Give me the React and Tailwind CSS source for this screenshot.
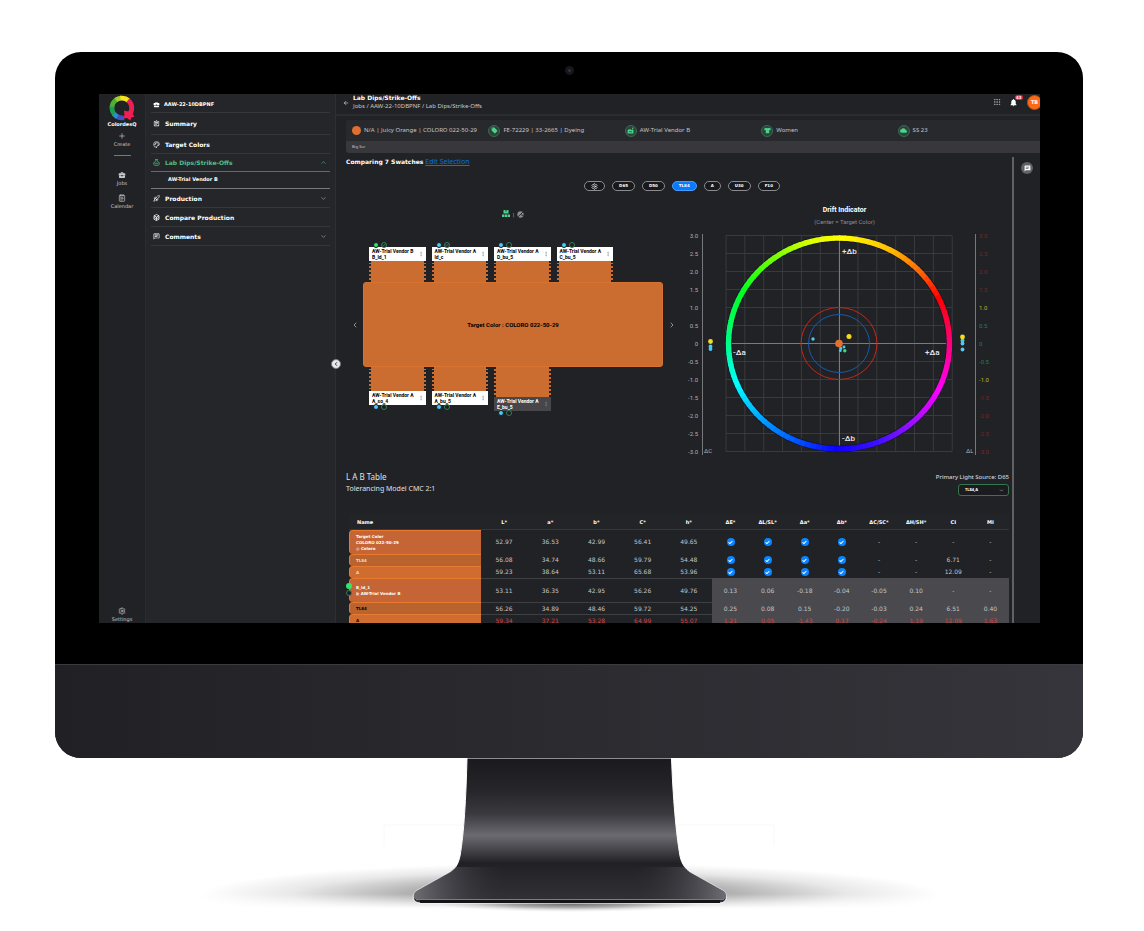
import { useState } from "react";
import {
  ArrowLeft,
  Check,
  ChevronDown,
  ChevronLeft,
  ChevronRight,
  ChevronUp,
  EllipsisVertical,
  Grip,
  NotepadText,
  Palette,
  Plus,
  Rocket,
  Settings,
} from "lucide-react";
import {
  MdBusinessCenter,
  MdChat,
  MdFactory,
  MdLocalOffer,
  MdNotifications,
  MdOutlineAssignment,
  MdOutlineChat,
  MdWbCloudy,
} from "react-icons/md";
import { FaTshirt } from "react-icons/fa";

function Flask({ className }) {
  return (
    <svg viewBox="0 0 14 14" className={className} fill="none" stroke="currentColor" strokeWidth="1.5" aria-hidden="true">
      <path d="M4.500 1H9.500M5.500 1V4.500M8.500 1V4.500M5 5A4.200 4.200 0 0 0 3 12.500H11A4.200 4.200 0 0 0 9 5M3.500 8.500H10.500" />
    </svg>
  );
}

function Stack({ className }) {
  return (
    <svg viewBox="0 0 14 14" className={className} fill="none" stroke="currentColor" strokeWidth="1.5" aria-hidden="true">
      <path d="M7 1l5 2.500v7L7 13l-5-2.500v-7zM2 3.500L7 6l5-2.500M2 7l5 2.500L12 7M7 6v7" />
    </svg>
  );
}

const menu = [
  { label: "Summary", icon: MdOutlineAssignment, height: "h-[22px]" },
  { label: "Target Colors", icon: Palette, height: "h-[19px]" },
  { label: "Lab Dips/Strike-Offs", icon: Flask, height: "h-[18px]", active: true, open: true, child: "AW-Trial Vendor B" },
  { label: "Production", icon: Rocket, height: "h-[19px]", open: false },
  { label: "Compare Production", icon: Stack, height: "h-[19px]" },
  { label: "Comments", icon: MdOutlineChat, height: "h-[19px]", open: false },
];

const facts = [
  { text: "N/A | Juicy Orange | COLORO 022-50-29" },
  { text: "FE-72229 | 33-2665 | Dyeing", icon: MdLocalOffer },
  { text: "AW-Trial Vendor B", icon: MdFactory },
  { text: "Women", icon: FaTshirt },
  { text: "SS 23", icon: MdWbCloudy },
];

const lights = ["D65", "D50", "TL84", "A", "U30", "F10"];

const topSwatches = [
  { vendor: "AW-Trial Vendor B", name: "B_ld_1", dot: "bg-[#2ee66b]", approved: true },
  { vendor: "AW-Trial Vendor A", name: "ld_c", dot: "bg-[#4cc9f5]", approved: true },
  { vendor: "AW-Trial Vendor A", name: "D_bu_5", dot: "bg-[#4cc9f5]" },
  { vendor: "AW-Trial Vendor A", name: "C_bu_5", dot: "bg-[#4cc9f5]" },
];

const bottomSwatches = [
  { vendor: "AW-Trial Vendor A", name: "A_so_4", dot: "bg-[#4cc9f5]" },
  { vendor: "AW-Trial Vendor A", name: "A_bu_5", dot: "bg-[#4cc9f5]" },
  { vendor: "AW-Trial Vendor A", name: "E_bu_5", dot: "bg-[#4cc9f5]", selected: true },
];

const columns = ["L", "a", "b", "C", "h", "ΔE", "ΔL/SL", "Δa", "Δb", "ΔC/SC", "ΔH/SH", "CI", "MI"];

const target = [
  { kind: "target", lab: ["52.97", "36.53", "42.99", "56.41", "49.65"], rest: ["-", "-", "-", "-"] },
  { kind: "light", name: "TL84", lab: ["56.08", "34.74", "48.66", "59.79", "54.48"], rest: ["-", "-", "6.71", "-"] },
  { kind: "light", name: "A", lab: ["59.23", "38.64", "53.11", "65.68", "53.96"], rest: ["-", "-", "12.09", "-"] },
];

const sample = [
  { kind: "sample", lab: ["53.11", "36.35", "42.95", "56.26", "49.76"], delta: ["0.13", "0.06", "-0.18", "-0.04", "-0.05", "0.10", "-", "-"] },
  { kind: "light", name: "TL84", lab: ["56.26", "34.89", "48.46", "59.72", "54.25"], delta: ["0.25", "0.08", "0.15", "-0.20", "-0.03", "0.24", "6.51", "0.40"] },
  { kind: "light", name: "A", fail: true, lab: ["59.34", "37.21", "53.28", "64.99", "55.07"], delta: ["1.21", "0.05", "-1.43", "0.17", "-0.24", "1.19", "12.09", "1.63"] },
];

// clockwise from the top of the wheel: angle, r, g, b
const hueStops = [
  [0, 255, 255, 0],
  [25, 255, 192, 0],
  [45, 255, 106, 0],
  [63, 255, 0, 0],
  [90, 255, 0, 128],
  [115, 255, 0, 255],
  [140, 144, 16, 255],
  [158, 64, 16, 255],
  [180, 16, 0, 255],
  [200, 0, 80, 255],
  [220, 0, 150, 255],
  [246, 0, 255, 255],
  [270, 0, 255, 128],
  [298, 0, 255, 32],
  [325, 128, 255, 0],
  [345, 224, 255, 0],
  [360, 255, 255, 0],
];

function hueAt(angle) {
  const i = Math.max(1, hueStops.findIndex((s) => s[0] >= angle));
  const a = hueStops[i - 1];
  const b = hueStops[i];
  const t = (angle - a[0]) / (b[0] - a[0]);
  const mix = [1, 2, 3].map((k) => Math.round(a[k] + (b[k] - a[k]) * t));
  return `rgb(${mix.join(",")})`;
}

function wheelPoint(angle) {
  const rad = (angle * Math.PI) / 180;
  return `${(159 + 110.5 * Math.sin(rad)).toFixed(2)} ${(113.5 - 105.5 * Math.cos(rad)).toFixed(2)}`;
}

function Logo() {
  return (
    <svg viewBox="0 0 26 26" className="size-[26px]" fill="none" strokeWidth="4.8" aria-hidden="true">
      <path d="M3 12.500A10 10 0 0 1 7.600 4.600" stroke="#4fae33" />
      <path d="M6.900 5A10 10 0 0 1 12 3.200" stroke="#a6cf2b" />
      <path d="M11.400 3.200A10 10 0 0 1 19.600 5.600" stroke="#f6e61c" />
      <path d="M3 11.800A10 10 0 0 0 5.500 19.600" stroke="#1f9d55" />
      <path d="M5 19A10 10 0 0 0 9 22" stroke="#2a8fd0" />
      <path d="M8.300 21.600A10 10 0 0 0 15 22.800" stroke="#3b55c4" />
      <path d="M19 5.100A10 10 0 0 1 21 18.500" stroke="#ee1f52" />
      <path d="M15 15.500l4 1 3.600-1.500 1 4 2 2.500-3.400 1-1 3-3.200-2.500-3.600.6 1-3.600z" fill="#ee1f52" />
    </svg>
  );
}

function RailItem({ icon: Icon, label }) {
  return (
    <button className="flex w-full flex-col items-center gap-px text-[5px] leading-[7px] text-[#c9c9cc]">
      <Icon className="size-[8px]" />
      {label}
    </button>
  );
}

function Rail() {
  return (
    <nav className="flex w-[47px] shrink-0 flex-col items-center border-r border-[#2b2c30] bg-[#212226] pt-px">
      <Logo />
      <span className="text-[5px] font-bold leading-[6px] text-white">ColordesQ</span>
      <div className="mt-[5px] w-full">
        <RailItem icon={Plus} label="Create" />
      </div>
      <div className="mt-[7px] w-[17px] border-t border-[#77787c]" />
      <div className="mt-[15px] flex w-full flex-col gap-[7px]">
        <RailItem icon={MdBusinessCenter} label="Jobs" />
        <RailItem icon={NotepadText} label="Calendar" />
      </div>
      <div className="mt-auto w-full">
        <RailItem icon={Settings} label="Settings" />
      </div>
    </nav>
  );
}

function JobMenu() {
  return (
    <aside className="w-[190px] shrink-0 border-r border-[#2e2f33] bg-[#25262a] px-[5px] font-bold text-white">
      <h2 className="flex h-[19px] items-center gap-[4px] border-b border-[#36373b] pl-[2px] pt-[3px] text-[5px]">
        <MdBusinessCenter className="size-[7px]" />
        AAW-22-10DBPNF
      </h2>
      <ul>
        {menu.map(({ label, icon: Icon, height, active, open, child }) => (
          <li key={label}>
            <a
              href="#"
              className={`flex items-center gap-[5px] border-b pl-[2px] text-[6px] ${height} ${active ? "border-[#2f8a5b] text-[#4fc088]" : "border-[#36373b]"}`}
            >
              <Icon className="size-[7px]" />
              {label}
              {open === true && <ChevronUp className="ml-auto mr-[3px] size-[7px]" />}
              {open === false && <ChevronDown className="ml-auto mr-[3px] size-[7px] text-[#b0b0b4]" />}
            </a>
            {child && (
              <a href="#" className="flex h-[17px] items-center border-b border-[#77787c] pl-[17px] text-[5px]">
                {child}
              </a>
            )}
          </li>
        ))}
      </ul>
    </aside>
  );
}

function TopBar() {
  return (
    <header className="flex h-[22px] shrink-0 items-start justify-between border-b-2 border-[#2b2c30] pl-[7px]">
      <div className="flex items-center gap-[4px]">
        <a href="#" aria-label="Back">
          <ArrowLeft className="size-[6px] text-white" />
        </a>
        <div>
          <h1 className="text-[6px] font-bold leading-[8px] text-white">Lab Dips/Strike-Offs</h1>
          <p className="font-['Noto_Sans',sans-serif] text-[6px] leading-[9px] text-[#c9c9cc]">
            Jobs / AAW-22-10DBPNF / Lab Dips/Strike-Offs
          </p>
        </div>
      </div>
      <div className="flex items-center">
        <button aria-label="Apps">
          <Grip className="size-[8px] text-[#b0b0b4]" />
        </button>
        <button aria-label="Notifications" className="relative ml-[8px] mr-[9px]">
          <MdNotifications className="size-[9px] text-white" />
          <span className="absolute -top-[3px] left-[6px] rounded-full bg-[#e8253c] px-px text-[4px] font-bold leading-[5px] text-white">
            43
          </span>
        </button>
        <button className="-mr-[2px] mt-px grid size-[15px] place-items-center rounded-full border border-[#a9521c] bg-[#ff6a13] text-[5px] font-bold text-white">
          TB
        </button>
      </div>
    </header>
  );
}

function FactBar() {
  return (
    <section className="ml-[10px] mt-[4px] shrink-0 overflow-hidden rounded-l-[3px] font-['Noto_Sans',sans-serif] text-[#c4c4c8]">
      <div className="grid h-[21px] grid-cols-5 items-center bg-[#28292d] px-[6px] text-[6px]">
        {facts.map(({ text, icon: Icon }) => (
          <div key={text} className="flex items-center gap-[3px] whitespace-nowrap">
            {Icon ? (
              <span className="grid size-[12px] place-items-center rounded-full border border-[#3b6b54] bg-[#2a4438]">
                <Icon className="size-[7px] text-[#4fd08e]" />
              </span>
            ) : (
              <span className="size-[9px] rounded-full bg-[#de6f33]" />
            )}
            {text}
          </div>
        ))}
      </div>
      <p className="bg-[#38383c] pl-[6px] text-[4px] leading-[12px]">Big Sur</p>
    </section>
  );
}

function Lights({ value, onChange }) {
  return (
    <div className="mt-[14px] flex justify-center gap-[7px] pl-[9px] text-[4px] font-bold leading-[8px] text-white">
      <button aria-label="Light settings" className="rounded-full border border-[#8b8b8f] bg-[#18191b] px-[6px]">
        <Settings className="size-[7px]" />
      </button>
      {lights.map((light) => (
        <button
          key={light}
          onClick={() => onChange(light)}
          className={`rounded-full border px-[6px] ${light === value ? "border-[#4a9bff] bg-[#0a7aff]" : "border-[#8b8b8f] bg-[#18191b]"}`}
        >
          {light}
        </button>
      ))}
    </div>
  );
}

function Status({ swatch, className }) {
  return (
    <div className={`absolute left-[4px] flex gap-[2px] ${className}`}>
      <span className={`size-[6px] rounded-full border border-[#1b1f1e] ${swatch.dot} bg-clip-border`} />
      <span className="grid size-[6px] place-items-center rounded-full border border-[#3a7a5b] bg-[#1b1f1e]">
        {swatch.approved && <Check className="size-[4px] text-[#4fae7c]" strokeWidth={4} />}
      </span>
    </div>
  );
}

function SwatchLabel({ swatch }) {
  return (
    <div className={`flex h-[14px] items-center justify-between pl-[3px] pr-[2px] ${swatch.selected ? "bg-[#47474b] text-white" : "bg-white text-black"}`}>
      <p className="whitespace-nowrap text-[5px] font-bold leading-[6px]">
        {swatch.vendor}
        <br />
        {swatch.name}
      </p>
      <button aria-label="Swatch menu">
        <EllipsisVertical className="size-[6px] text-[#8b8b8f]" />
      </button>
    </div>
  );
}

function Swatches() {
  return (
    <div className="w-[334px] shrink-0 pt-[18px] font-['Roboto',sans-serif]">
      <div className="flex h-[10px] items-center justify-center gap-[3px] text-[6px] text-[#a0a0a4]">
        <button aria-label="Card view">
          <svg viewBox="0 0 8 8" className="size-[8px]" fill="#4fd08e">
            <path d="M1.500 0h2v1.500h1V0h2v3.500h-5zM0 4.500h2.300V7H0zM2.800 4.500h2.400V7H2.800zM5.700 4.500H8V7H5.700z" />
          </svg>
        </button>
        |
        <button aria-label="Wheel view">
          <svg viewBox="0 0 8 8" className="size-[7px]">
            <circle cx="4" cy="4" r="3.600" fill="#8b8b8f" />
            <path d="M4 4l3-3M4 4l3.400 1.400M4 4L1.400 6.500" stroke="#212226" />
          </svg>
        </button>
      </div>
      <div className="ml-[23px] mr-[67px] mt-[28px] grid grid-cols-4 gap-x-[6px]">
        {topSwatches.map((swatch) => (
          <div key={swatch.name} className="relative">
            <SwatchLabel swatch={swatch} />
            <div className="h-[21px] border-x-2 border-dotted border-[#212226] bg-[#cb6d30]" />
            <Status swatch={swatch} className="-top-[5px]" />
          </div>
        ))}
      </div>
      <div className="flex items-center">
        <button aria-label="Previous" className="w-[17px] pl-[5px]">
          <ChevronLeft className="size-[8px] text-[#c9c9cc]" />
        </button>
        <div className="grid h-[85px] flex-1 place-items-center rounded-[3px] border border-[#d8732f] bg-[#cb6d30] text-[6px] font-bold text-black">
          Target Color : COLORO 022-50-29
        </div>
        <button aria-label="Next" className="w-[17px] pl-[5px]">
          <ChevronRight className="size-[8px] text-[#c9c9cc]" />
        </button>
      </div>
      <div className="ml-[23px] mr-[67px] grid grid-cols-4 items-start gap-x-[6px]">
        {bottomSwatches.map((swatch) => (
          <div key={swatch.name} className="relative">
            <div className={`border-x-2 border-dotted border-[#212226] bg-[#cb6d30] ${swatch.selected ? "h-[30px]" : "h-[24px]"}`} />
            <SwatchLabel swatch={swatch} />
            <Status swatch={swatch} className="-bottom-[5px]" />
          </div>
        ))}
      </div>
    </div>
  );
}

function scaleColor(v) {
  if (Math.abs(v) > 1) return "#7c2620";
  if (Math.abs(v) === 1) return "#b5b52c";
  return "#2f7a50";
}

function Drift() {
  const ticks = Array.from({ length: 13 }, (_, i) => 3 - i * 0.5);
  const steps = Array.from({ length: 120 }, (_, i) => i * 3);
  return (
    <div className="min-w-0 flex-1 pt-[14px] text-center font-['Roboto',sans-serif]">
      <h3 className="text-[7px] font-bold leading-[10px] text-white">Drift Indicator</h3>
      <p className="mt-[3px] text-[6px] leading-[8px] text-[#8b8b8f]">(Center = Target Color)</p>
      <svg viewBox="0 0 329 230" className="mt-[4px] w-full" role="img" aria-label="Drift Indicator">
        <g stroke="#3f4044" strokeWidth="0.8">
          {ticks.map((v, i) => (
            <path key={v} d={`M46 ${5.5 + i * 18}H272M${46 + i * 18.85} 5.500V221.500`} />
          ))}
        </g>
        <path d="M46 113.500H272M159.500 5V221" stroke="#7a7a7e" />
        <path d="M22.500 4V225M295.500 4V225" stroke="#77787c" />
        <ellipse cx="159" cy="113.500" rx="110.500" ry="105.500" fill="none" stroke="#15162a" strokeWidth="7" />
        {steps.map((a) => (
          <path key={a} d={`M${wheelPoint(a)}L${wheelPoint(a + 3.6)}`} stroke={hueAt(a)} strokeWidth="5.4" />
        ))}
        <ellipse cx="159" cy="113.500" rx="38" ry="36" fill="none" stroke="#c2281c" />
        <ellipse cx="159" cy="113.500" rx="30.500" ry="29" fill="none" stroke="#1d58a8" />
        <g fill="#4cc9f5">
          <circle cx="133" cy="109" r="1.700" />
          <circle cx="164" cy="117" r="1.400" />
          <circle cx="161" cy="118.500" r="1.400" />
          <circle cx="160.300" cy="120.700" r="1.400" />
          <circle cx="30.500" cy="116.500" r="1.900" />
          <circle cx="30.500" cy="119" r="1.900" />
          <circle cx="282.500" cy="110.500" r="1.900" />
          <circle cx="282.500" cy="113.500" r="1.900" />
          <circle cx="282.500" cy="119.500" r="1.900" />
        </g>
        <circle cx="164.800" cy="120.800" r="1.700" fill="#2ee66b" />
        <g fill="#f2dc1d">
          <circle cx="169" cy="106.500" r="2.500" />
          <circle cx="30.500" cy="111.500" r="2.400" />
          <circle cx="282.500" cy="107" r="2.400" />
        </g>
        <circle cx="159" cy="113.500" r="3.800" fill="#e2702f" />
        <g fontSize="8" fontWeight="500" fill="#e8e8ea">
          <text x="162" y="24">+Δb</text>
          <text x="162" y="211">-Δb</text>
          <text x="53" y="125">-Δa</text>
          <text x="245" y="125">+Δa</text>
        </g>
        <g fontSize="6" fill="#b0b0b4">
          {ticks.map((v, i) => (
            <text key={v} x="18" y={8 + i * 18} textAnchor="end">
              {v === 0 ? "0" : v.toFixed(1)}
            </text>
          ))}
          <text x="24" y="223">ΔC</text>
          <text x="286" y="223">ΔL</text>
        </g>
        <g fontSize="6">
          {ticks.map((v, i) => (
            <text key={v} x="299" y={8 + i * 18} fill={scaleColor(v)}>
              {v === 0 ? "0" : v.toFixed(1)}
            </text>
          ))}
        </g>
      </svg>
    </div>
  );
}

function NameCell({ row, dark }) {
  if (row.kind === "target") {
    return (
      <th className="h-[24px] rounded-l-[4px] border-l border-t border-[#e8792e] bg-[#c56536] pl-[6px] text-left text-[4px] leading-[6px] text-white">
        <span className="block">Target Color</span>
        <span className="block">COLORO 022-50-29</span>
        <span className="block">◎ Coloro</span>
      </th>
    );
  }
  if (row.kind === "sample") {
    return (
      <th className="relative h-[24px] rounded-l-[4px] border-l border-t border-[#e8792e] bg-[#c56536] pl-[6px] text-left text-[4px] leading-[6px] text-white">
        <span className="block">B_ld_1</span>
        <span className="block">⊵ AW-Trial Vendor B</span>
        <span className="absolute -left-[4px] top-[4px] size-[6px] rounded-full bg-[#2ee66b]" />
        <span className="absolute -left-[4px] top-[11px] size-[6px] rounded-full border border-[#3a7a5b] bg-[#1b1f1e]" />
      </th>
    );
  }
  return (
    <th
      className={`h-[12px] rounded-l-[4px] border-l border-t border-[#e8792e] pl-[6px] text-left text-[4px] leading-[6px] ${row.name === "A" ? "bg-[#cf6d30]" : "bg-[#b9642f]"} ${dark ? "text-black" : "text-[#f3d9c6]"}`}
    >
      {row.name}
    </th>
  );
}

function LabTable() {
  return (
    <table className="ml-[3px] mt-[18px] w-[calc(100%-3px)] table-fixed border-separate border-spacing-0 text-center text-[6px] leading-[8px] text-[#c4c4c8]">
      <colgroup>
        <col className="w-[20%]" />
        {columns.map((c, i) => (
          <col key={c} className={i < 5 ? "w-[7%]" : ""} />
        ))}
      </colgroup>
      <thead className="bg-[#232428] text-[5px] text-white">
        <tr>
          <th className="h-[16px] border-b border-[#36373b] pl-[8px] text-left">Name</th>
          {columns.map((c) => (
            <th key={c} className="border-b border-[#36373b]">
              {c}
              {c !== "CI" && c !== "MI" && "*"}
            </th>
          ))}
        </tr>
      </thead>
      <tbody>
        {target.map((row) => (
          <tr key={row.kind + row.name}>
            <NameCell row={row} />
            {row.lab.map((v, i) => (
              <td key={i}>{v}</td>
            ))}
            {["ΔE", "ΔL", "Δa", "Δb"].map((c) => (
              <td key={c}>
                <label className="mx-auto grid size-[8px] place-items-center">
                  <input
                    type="checkbox"
                    defaultChecked
                    aria-label={c}
                    className="col-start-1 row-start-1 size-[8px] appearance-none rounded-full bg-[#3a3a3e] checked:bg-[#0a84ff]"
                  />
                  <Check className="pointer-events-none col-start-1 row-start-1 size-[5px] text-white" strokeWidth={5} />
                </label>
              </td>
            ))}
            {row.rest.map((v, i) => (
              <td key={i}>{v}</td>
            ))}
          </tr>
        ))}
      </tbody>
      <tbody>
        {sample.map((row) => (
          <tr key={row.kind + row.name} className={row.fail ? "text-[#d5434a]" : ""}>
            <NameCell row={row} dark />
            {row.lab.map((v, i) => (
              <td key={i} className="border-t border-[#3f4044]">
                {v}
              </td>
            ))}
            {row.delta.map((v, i) => (
              <td key={i} className="border-t border-[#4a4a4e] bg-[#4a4a4e]">
                {v}
              </td>
            ))}
          </tr>
        ))}
      </tbody>
    </table>
  );
}

function Stand() {
  return (
    <svg viewBox="0 0 1144 173" className="block w-full" aria-hidden="true">
      <defs>
        <linearGradient id="neck" x1="0" y1="0" x2="0" y2="146" gradientUnits="userSpaceOnUse">
          <stop offset="0" stopColor="#1a1a1e" />
          <stop offset="0.220" stopColor="#26262a" />
          <stop offset="0.380" stopColor="#3a393e" />
          <stop offset="0.530" stopColor="#6b6a70" />
          <stop offset="0.600" stopColor="#515055" />
          <stop offset="0.720" stopColor="#212024" />
          <stop offset="0.850" stopColor="#2a292e" />
          <stop offset="1" stopColor="#333237" />
        </linearGradient>
        <linearGradient id="foot" x1="413" x2="727" y1="0" y2="0" gradientUnits="userSpaceOnUse">
          <stop offset="0" stopColor="#77767c" stopOpacity="0.900" />
          <stop offset="0.300" stopColor="#2e2d32" stopOpacity="0" />
          <stop offset="0.700" stopColor="#2e2d32" stopOpacity="0" />
          <stop offset="1" stopColor="#77767c" stopOpacity="0.900" />
        </linearGradient>
        <radialGradient id="shade">
          <stop offset="0" stopColor="#000" stopOpacity="0.500" />
          <stop offset="0.450" stopColor="#000" stopOpacity="0.300" />
          <stop offset="0.750" stopColor="#000" stopOpacity="0.090" />
          <stop offset="1" stopColor="#000" stopOpacity="0" />
        </radialGradient>
        <linearGradient id="floor" x1="0" x2="0" y1="0" y2="1">
          <stop offset="0" stopColor="#fff" stopOpacity="0" />
          <stop offset="0.400" stopColor="#fff" />
          <stop offset="1" stopColor="#fff" />
        </linearGradient>
      </defs>
      <ellipse cx="570" cy="137" rx="370" ry="32" fill="url(#shade)" />
      <rect x="190" y="136" width="760" height="37" fill="url(#floor)" />
      <ellipse cx="570" cy="146" rx="130" ry="8" fill="url(#shade)" />
      <path d="M384 88V67H462M678 67H774V88" fill="none" stroke="#f8f8f8" />
      <path
        d="M467 0H671.500C673 40 676 75 680 98C682 107 686 111 690 114L724 133C729 138 726 145 720 145H420C413 145 411 138 416 133L450 114C455 111 458 107 460 98C464 75 466 40 467 0Z"
        fill="url(#neck)"
        stroke="#fff"
      />
      <path d="M456 109H684C686 111 688 113 690 114L724 133C727 136 727 139 725 141H415C413 139 413 136 416 133L450 114Z" fill="url(#foot)" />
      <path d="M416 141.500H724" stroke="#7d7c82" />
      <path d="M420 143.500H720" stroke="#141417" strokeWidth="3" />
    </svg>
  );
}

export default function App() {
  const [light, setLight] = useState("TL84");

  return (
    <div className="bg-white pt-[52px] font-['DejaVu_Sans',sans-serif]">
      <div className="ml-[55px] mr-[61px] overflow-hidden rounded-[26px] bg-black">
        <div className="flex h-[42px] items-center justify-center pb-[6px]">
          <span className="grid size-[9px] place-items-center rounded-full bg-[#17171b]">
            <span className="size-[3px] rounded-full bg-[#2c3442]" />
          </span>
        </div>
        <div className="ml-[44px] mr-[43px] flex aspect-[941/529] overflow-hidden bg-[#212226]">
          <Rail />
          <JobMenu />
          <div className="relative flex min-w-0 flex-1 flex-col">
            <TopBar />
            <FactBar />
            <button
              aria-label="Collapse menu"
              className="absolute -left-[5px] top-[265px] grid size-[10px] place-items-center rounded-full border border-[#77787c] bg-[#e8e8ea]"
            >
              <ChevronLeft className="size-[6px] text-black" strokeWidth={3} />
            </button>
            <div className="flex min-h-0 flex-1">
              <main className="mt-[4px] min-w-0 flex-1 border-r-2 border-[#606065] pl-[10px] pr-[3px]">
                <p className="flex items-center gap-[2px] text-[6px] leading-[10px] text-white">
                  <strong>Comparing 7 Swatches</strong>
                  <a href="#" className="font-['Noto_Sans',sans-serif] text-[7px] text-[#0a6fe0] underline">
                    Edit Selection
                  </a>
                </p>
                <Lights value={light} onChange={setLight} />
                <div className="flex">
                  <Swatches />
                  <Drift />
                </div>
                <div className="mt-[12px] flex justify-between font-['Noto_Sans',sans-serif] text-[#e0e0e3]">
                  <div>
                    <h2 className="text-[8px] leading-[10px]">L A B Table</h2>
                    <p className="mt-[2px] text-[7px] leading-[10px]">Tolerancing Model CMC 2:1</p>
                  </div>
                  <div className="flex flex-col items-end gap-[2px]">
                    <label htmlFor="source" className="text-[6px] leading-[10px]">
                      Primary Light Source: D65
                    </label>
                    <div className="relative flex">
                      <select
                        id="source"
                        className="h-[12px] w-[51px] appearance-none rounded-[3px] border border-[#35764f] bg-[#1b1c1f] pl-[6px] text-[4px] font-bold text-white"
                      >
                        <option>TL84,A</option>
                      </select>
                      <ChevronDown className="pointer-events-none absolute right-[5px] top-[4px] size-[5px]" />
                    </div>
                  </div>
                </div>
                <LabTable />
              </main>
              <div className="w-[26px] pt-[9px]">
                <button aria-label="Comments" className="mx-auto grid size-[12px] place-items-center rounded-full bg-[#606065]">
                  <MdChat className="size-[7px] text-white" />
                </button>
              </div>
            </div>
          </div>
        </div>
        <div className="mt-[41px] h-[94px] border-t border-[#3a3a40] bg-linear-to-r from-[#212125] to-[#36353b]" />
      </div>
      <Stand />
    </div>
  );
}
